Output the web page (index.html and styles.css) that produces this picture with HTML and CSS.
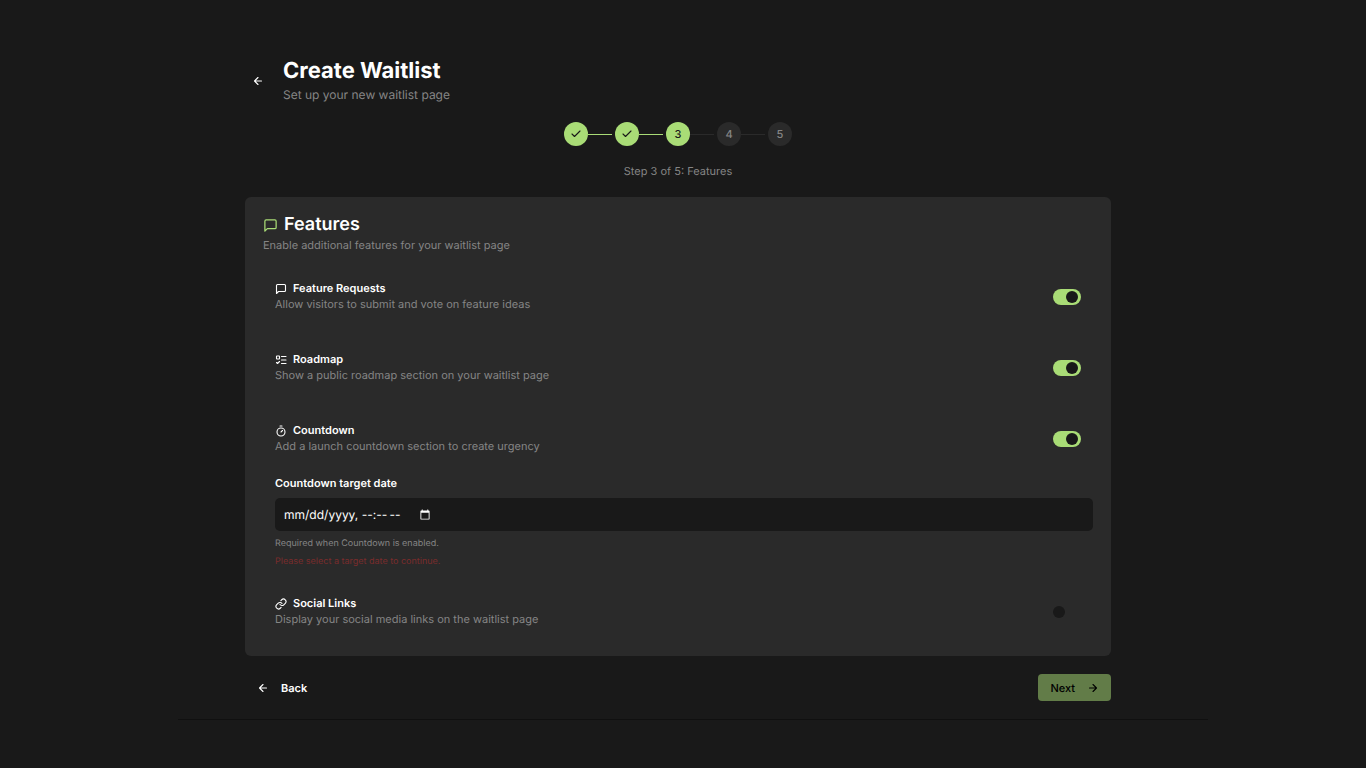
FILE: index.html
```html
<!DOCTYPE html>
<html lang="en">
<head>
  <meta charset="UTF-8">
  <title>Create Waitlist</title>
  <meta name="viewport" content="width=device-width, initial-scale=1.0">
  <link rel="stylesheet" href="styles.css">
</head>
<body>
  <svg class="sprite" aria-hidden="true">
    <symbol id="arrow-left" viewBox="0 0 24 24"><path d="m12 19-7-7 7-7M19 12H5"/></symbol>
    <symbol id="arrow-right" viewBox="0 0 24 24"><path d="M5 12h14M12 5l7 7-7 7"/></symbol>
    <symbol id="check" viewBox="0 0 24 24"><path d="M20 6 9 17l-5-5"/></symbol>
    <symbol id="message" viewBox="0 0 24 24"><path d="M21 15a2 2 0 0 1-2 2H7l-4 4V5a2 2 0 0 1 2-2h14a2 2 0 0 1 2 2z"/></symbol>
    <symbol id="roadmap" viewBox="0 0 24 24"><path d="M13 5h9M13 12h9M13 19h9M3 17l2 2 4-4"/><rect x="3" y="4" width="6" height="6" rx="1"/></symbol>
    <symbol id="timer" viewBox="0 0 24 24"><path d="M10 2h4M12 14l3-3"/><circle cx="12" cy="14" r="8"/></symbol>
    <symbol id="link" viewBox="0 0 24 24"><path d="M10 13a5 5 0 0 0 7.54.54l3-3a5 5 0 0 0-7.07-7.07l-1.72 1.71"/><path d="M14 11a5 5 0 0 0-7.54-.54l-3 3a5 5 0 0 0 7.07 7.07l1.71-1.71"/></symbol>
  </svg>

  <main class="page">
    <header class="page-header">
      <button class="icon-btn" type="button" aria-label="Go back"><svg class="icon"><use href="#arrow-left"/></svg></button>
      <div>
        <h1>Create Waitlist</h1>
        <p>Set up your new waitlist page</p>
      </div>
    </header>

    <ol class="steps">
      <li class="step done"><span class="dot"><svg class="icon"><use href="#check"/></svg></span></li>
      <li class="step done"><span class="dot"><svg class="icon"><use href="#check"/></svg></span></li>
      <li class="step current"><span class="dot">3</span></li>
      <li class="step"><span class="dot">4</span></li>
      <li class="step"><span class="dot">5</span></li>
    </ol>
    <p class="step-label">Step 3 of 5: Features</p>

    <form id="features-form">
      <section class="card">
        <div class="card-header">
          <h2><svg class="icon"><use href="#message"/></svg>Features</h2>
          <p>Enable additional features for your waitlist page</p>
        </div>

        <div class="feature">
          <div>
            <label for="requests"><svg class="icon"><use href="#message"/></svg>Feature Requests</label>
            <p>Allow visitors to submit and vote on feature ideas</p>
          </div>
          <input class="switch" type="checkbox" role="switch" id="requests" checked>
        </div>

        <div class="feature">
          <div>
            <label for="roadmap-on"><svg class="icon"><use href="#roadmap"/></svg>Roadmap</label>
            <p>Show a public roadmap section on your waitlist page</p>
          </div>
          <input class="switch" type="checkbox" role="switch" id="roadmap-on" checked>
        </div>

        <div class="feature">
          <div>
            <label for="countdown"><svg class="icon"><use href="#timer"/></svg>Countdown</label>
            <p>Add a launch countdown section to create urgency</p>
          </div>
          <input class="switch" type="checkbox" role="switch" id="countdown" checked>
        </div>

        <div class="date-field">
          <label for="target">Countdown target date</label>
          <input type="datetime-local" id="target">
          <p class="hint">Required when Countdown is enabled.</p>
          <p class="error">Please select a target date to continue.</p>
        </div>

        <div class="feature">
          <div>
            <label for="social"><svg class="icon"><use href="#link"/></svg>Social Links</label>
            <p>Display your social media links on the waitlist page</p>
          </div>
          <input class="switch" type="checkbox" role="switch" id="social">
        </div>
      </section>

      <div class="actions">
        <button class="btn" type="button"><svg class="icon"><use href="#arrow-left"/></svg>Back</button>
        <button class="btn primary" type="submit" disabled>Next<svg class="icon"><use href="#arrow-right"/></svg></button>
      </div>
    </form>
  </main>
</body>
</html>
```
FILE: styles.css
```css
:root {
  --bg: #191919;
  --card: #2a2a2a;
  --text: #ffffff;
  --muted: #858585;
  --primary: #a9dc76;
  color-scheme: dark;
}

* {
  box-sizing: border-box;
}

body {
  margin: 0;
  padding-left: 20px;
  background: var(--bg);
  color: var(--text);
  font-family: Inter, sans-serif;
  font-size: 11px;
  line-height: 16px;
  text-rendering: geometricPrecision;
}

h1, h2, p, ol {
  margin: 0;
  padding: 0;
}

button, input {
  font: inherit;
  text-rendering: inherit;
}

.sprite {
  display: none;
}

.icon {
  width: 12px;
  height: 12px;
  flex: none;
  fill: none;
  stroke: currentColor;
  stroke-width: 2.2;
  stroke-linecap: round;
  stroke-linejoin: round;
}

.page {
  max-width: 1030px;
  margin: 0 auto;
  padding: 58px 97px 18px 67px;
  border-bottom: 1px solid #101010;
}

.page-header {
  display: flex;
  align-items: center;
  gap: 12px;
}

.icon-btn {
  display: flex;
  padding: 7px;
  border: none;
  background: none;
  color: var(--text);
  cursor: pointer;
}

.page-header h1 {
  font-size: 22px;
  font-weight: 700;
  line-height: 27px;
}

.page-header p {
  color: var(--muted);
  font-size: 12px;
  line-height: 19px;
}

.steps {
  display: flex;
  justify-content: center;
  margin-top: 18px;
  list-style: none;
}

.step {
  display: flex;
  align-items: center;
}

.step:not(:last-child)::after {
  content: "";
  width: 24px;
  height: 1px;
  margin-right: 3px;
  background: var(--card);
}

.step.done::after {
  background: var(--primary);
}

.dot {
  display: flex;
  align-items: center;
  justify-content: center;
  width: 24px;
  height: 24px;
  border-radius: 50%;
  background: var(--card);
  color: var(--muted);
  font-weight: 500;
}

.done .dot,
.current .dot {
  background: var(--primary);
  color: var(--bg);
}

.step-label {
  margin: 17px 0 18px;
  color: var(--muted);
  text-align: center;
}

.card {
  padding: 17px 18px 26px;
  border-radius: 6px;
  background: var(--card);
}

.card h2 {
  display: flex;
  align-items: center;
  gap: 6px;
  font-size: 18px;
  font-weight: 600;
  line-height: 22px;
}

.card h2 .icon {
  width: 15px;
  height: 15px;
  stroke-width: 2;
  color: var(--primary);
}

.card p {
  color: var(--muted);
}

.card-header p {
  margin-top: 1px;
}

.card-header {
  margin-bottom: 16px;
}

.feature {
  display: flex;
  align-items: center;
  justify-content: space-between;
  padding: 12px;
  margin-bottom: 16px;
}

.feature:last-child {
  margin-bottom: 0;
  padding-bottom: 3px;
}

.card label {
  display: flex;
  align-items: center;
  gap: 6px;
  font-weight: 600;
  line-height: 15px;
}

.switch {
  appearance: none;
  display: flex;
  align-items: center;
  width: 28px;
  height: 16px;
  margin: 0;
  padding: 0 3px;
  border-radius: 8px;
  cursor: pointer;
}

.switch::before {
  content: "";
  width: 12px;
  height: 12px;
  border-radius: 50%;
  background: var(--bg);
}

.switch:checked {
  justify-content: flex-end;
  background: var(--primary);
}

.switch:not(:checked) {
  padding: 0;
}

.date-field {
  padding-left: 12px;
  margin: -6px 0 13px;
}

.date-field input {
  display: flex;
  width: 100%;
  height: 33px;
  margin: 7px 0 4px;
  padding: 0 9px;
  border: none;
  border-radius: 5px;
  background: var(--bg);
  color: var(--text);
  font-size: 12px;
}

.date-field input::-webkit-datetime-edit {
  flex: none;
}

.date-field input::-webkit-datetime-edit-month-field,
.date-field input::-webkit-datetime-edit-day-field,
.date-field input::-webkit-datetime-edit-year-field,
.date-field input::-webkit-datetime-edit-hour-field,
.date-field input::-webkit-datetime-edit-minute-field,
.date-field input::-webkit-datetime-edit-ampm-field {
  padding: 0;
}

.date-field input::-webkit-calendar-picker-indicator {
  width: 12px;
  height: 12px;
  margin-left: -23px;
  padding: 0;
}

.card .hint,
.card .error {
  font-size: 9px;
  line-height: 18px;
}

.card .error {
  color: #7a2c2c;
}

.actions {
  display: flex;
  justify-content: space-between;
  margin-top: 18px;
}

.btn {
  display: flex;
  align-items: center;
  gap: 12px;
  height: 27px;
  padding: 0 12px;
  border: none;
  border-radius: 4px;
  background: none;
  color: var(--text);
  font-weight: 600;
  cursor: pointer;
}

.btn.primary {
  background: var(--primary);
  color: #000000;
  font-weight: 500;
}

.btn.primary:disabled {
  background: #627c48;
  cursor: default;
}
```
